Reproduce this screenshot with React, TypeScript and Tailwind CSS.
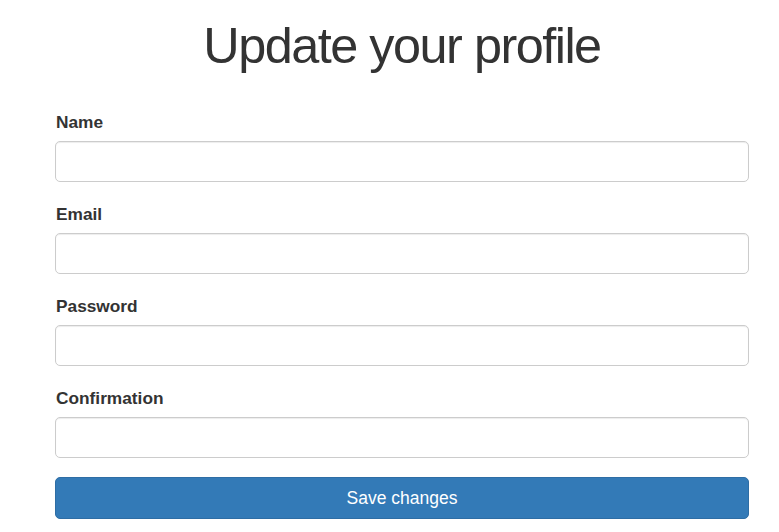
import { useState } from "react";

const fields = [
  { id: "name", label: "Name", type: "text" },
  { id: "email", label: "Email", type: "email" },
  { id: "password", label: "Password", type: "password" },
  { id: "confirmation", label: "Confirmation", type: "password" },
];

export default function App() {
  const [values, setValues] = useState<Record<string, string>>({});

  return (
    <div className="min-h-screen bg-white text-[#333] font-['Liberation_Sans',Arial,sans-serif]">
      <div className="ml-[55px] w-[694px]">
        <h1 className="pt-[18px] text-center text-[50.4px] leading-[55px] tracking-[-1.5px] font-normal">
          Update your profile
        </h1>

        <form className="mt-[35px] flex flex-col" onSubmit={(e) => e.preventDefault()}>
          {fields.map((f) => (
            <div key={f.id} className="flex flex-col">
              <label
                htmlFor={f.id}
                className="pt-[2px] mb-[7px] pl-[1px] text-[17.3px] leading-[24px] font-bold"
              >
                {f.label}
              </label>
              <input
                id={f.id}
                type={f.type}
                value={values[f.id] ?? ""}
                onChange={(e) => setValues({ ...values, [f.id]: e.target.value })}
                className="mb-[18px] h-[41px] w-full rounded-[5px] border border-[#ccc] px-3 text-[16.8px] shadow-[inset_0_1px_1px_rgba(0,0,0,0.075)] outline-none"
              />
            </div>
          ))}

          <button
            type="submit"
            className="mt-[1px] h-[42px] w-full rounded-[5px] border border-[#2e6da4] bg-[#337ab7] text-[17.5px] text-white"
          >
            Save changes
          </button>
        </form>
      </div>
    </div>
  );
}
